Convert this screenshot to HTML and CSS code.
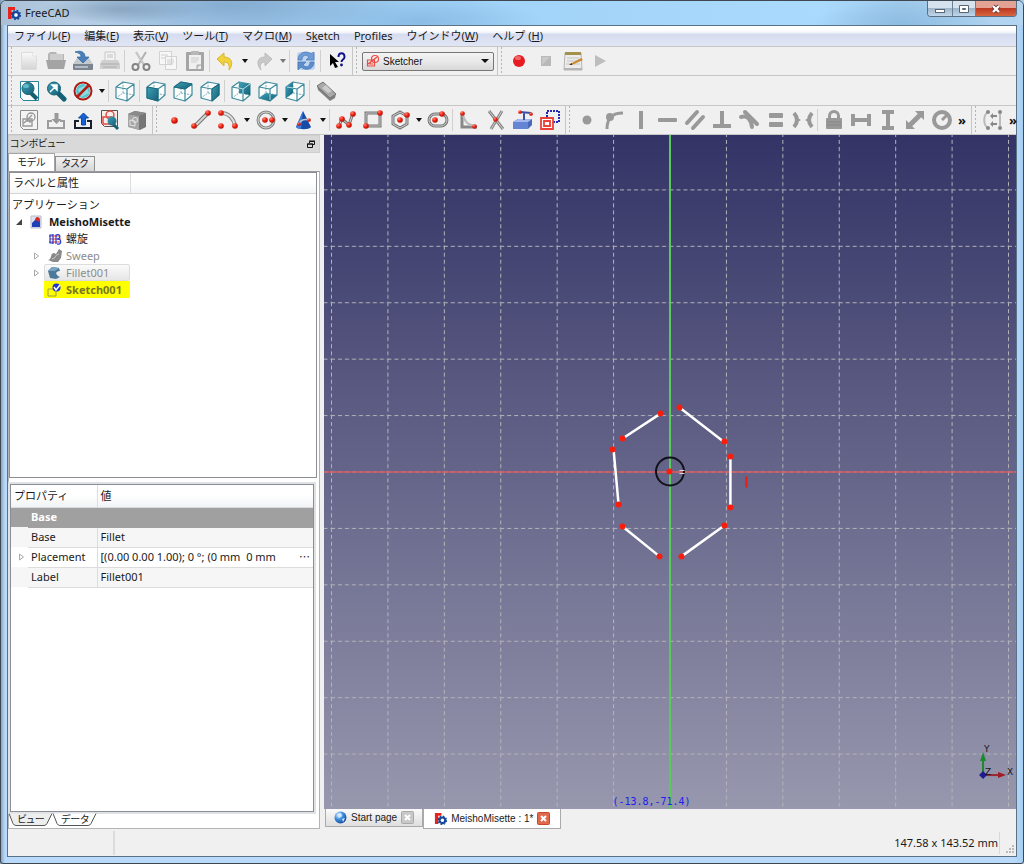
FILE: index.html
```html
<!DOCTYPE html>
<html lang="ja">
<head>
<meta charset="utf-8">
<title>FreeCAD</title>
<link rel="stylesheet" href="styles.css">
</head>
<body>
<svg class="defs" aria-hidden="true">
  <defs>
    <linearGradient id="pale" x1="0" y1="0" x2="0" y2="1"><stop offset="0" stop-color="#fafafa"/><stop offset="1" stop-color="#d4d4d4"/></linearGradient>
    <radialGradient id="globe" cx=".35" cy=".3" r=".8"><stop offset="0" stop-color="#d8f0ff"/><stop offset=".45" stop-color="#3f8fe0"/><stop offset="1" stop-color="#0c3f90"/></radialGradient>
    <radialGradient id="ball" cx=".35" cy=".3" r=".7"><stop offset="0" stop-color="#ff8a78"/><stop offset=".5" stop-color="#ef2413"/><stop offset="1" stop-color="#b51205"/></radialGradient>
    <linearGradient id="teal" x1="0" y1="0" x2="1" y2="1"><stop offset="0" stop-color="#3fa0b8"/><stop offset="1" stop-color="#136176"/></linearGradient>
    <linearGradient id="sky" x1="0" y1="0" x2="0" y2="1"><stop offset="0" stop-color="#333366"/><stop offset="1" stop-color="#9797ae"/></linearGradient>
    <pattern id="grid" width="56.5" height="56.5" patternUnits="userSpaceOnUse">
      <path d="M.5 0V56.5M0 .5H56.5" fill="none" stroke="#b4b4b8" stroke-dasharray="4 3"/>
    </pattern>
  </defs>
  <symbol id="logo" viewBox="0 0 14 14">
    <path d="M1 1h7v3H4.500v2H7v3H4.500v4H1z" fill="#e8231a"/>
    <circle cx="9" cy="9" r="3" fill="none" stroke="#15489c" stroke-width="2.200"/>
    <circle cx="9" cy="9" r="4.500" fill="none" stroke="#15489c" stroke-width="1.400" stroke-dasharray="1.750 1.780"/>
    <circle cx="9" cy="9" r="1.500" fill="#fff"/>
  </symbol>
  <symbol id="cube" viewBox="0 0 22 22">
    <path d="M2 7l7-5 11 2v11l-7 6-11-3z" fill="#fbfdfd"/>
    <g fill="none" stroke-linejoin="round">
      <path d="M9 2v11L2 18M9 13l11 2" stroke="#7fb0bd" stroke-width="1" stroke-dasharray="2 1"/>
      <path d="M2 7l11 2v12L2 18zM2 7l7-5 11 2-7 5M20 4v11l-7 6" stroke="#3f8b9d" stroke-width="1.200"/>
    </g>
  </symbol>
  <symbol id="dot" viewBox="0 0 6 6"><circle cx="3" cy="3" r="2.800" fill="url(#ball)"/></symbol>
  <symbol id="sketch" viewBox="0 0 14 14">
    <g fill="none" stroke="#ec4a42" stroke-width="1.200"><path d="M1.500 6h7v6h-7zM4 8v2h3"/><circle cx="9" cy="5" r="3.500"/><path d="M2 10l9-7"/></g>
  </symbol>
</svg>

<header class="titlebar">
  <svg class="i14"><use href="#logo"/></svg>
  <h1>FreeCAD</h1>
  <div class="winbuttons">
    <button aria-label="最小化"><svg viewBox="0 0 12 10"><rect x="1.500" y="5.500" width="9" height="3" fill="#fff" stroke="#596674"/></svg></button>
    <button aria-label="最大化"><svg viewBox="0 0 12 10"><path d="M1.500 1.500h9v7h-9zM4.500 4.500v1h3v-1z" fill="#fff" stroke="#596674" fill-rule="evenodd"/></svg></button>
    <button class="close" aria-label="閉じる"><svg viewBox="0 0 12 10"><path d="M3 2l6 6M9 2L3 8" stroke="#6c3535" stroke-width="4"/><path d="M3 2l6 6M9 2L3 8" stroke="#fff" stroke-width="2.400"/></svg></button>
  </div>
</header>

<div class="client">
<nav class="menubar">
  <a href="#">ファイル(<u>F</u>)</a><a href="#">編集(<u>E</u>)</a><a href="#">表示(<u>V</u>)</a><a href="#">ツール(<u>T</u>)</a><a href="#">マクロ(<u>M</u>)</a><a href="#">S<u>k</u>etch</a><a href="#">P<u>r</u>ofiles</a><a href="#">ウインドウ(<u>W</u>)</a><a href="#">ヘルプ (<u>H</u>)</a>
</nav>

<div class="toolrow">
  <div class="toolbar">
    <button aria-label="新規"><svg viewBox="0 0 22 22"><path d="M3.500 2.500h12l3 3v14h-15z" fill="url(#pale)" stroke="#dcdcdc"/><path d="M15 2v4h4" fill="#fff" stroke="#ddd"/></svg></button>
    <button aria-label="開く"><svg viewBox="0 0 22 22"><path d="M3 4l2-2h6l1 2h7v13H3z" fill="#b5b5b5"/><path d="M5 5h13M5 7h13M5 9h13" stroke="#e5e5e5"/><path d="M1 10h20l-2 9H3z" fill="#a4a4a4"/></svg></button>
    <button aria-label="保存"><svg viewBox="0 0 22 22"><path d="M5 8h12l4 6v5H1v-5z" fill="#c3c8cc"/><path d="M1 14h20v5q0 1-1 1H2q-1 0-1-1z" fill="#7b858f"/><path d="M3 17h13" stroke="#b4bdc5" stroke-width="2"/><path d="M3 2c6-2 10 0 10 5h4l-6 6-6-6h4c0-3-2-4-6-5z" fill="#4a80ba" stroke="#2d639f" stroke-width=".7"/></svg></button>
    <button aria-label="印刷"><svg viewBox="0 0 22 22"><path d="M6 2h10v9H6z" fill="#f3f3f3" stroke="#c8c8c8"/><path d="M8 5h6M8 7h6" stroke="#c2c2c2"/><path d="M3 10h16l2 4v5H1v-5z" fill="#cfcfcf"/><path d="M2 14h18M4 17h14" stroke="#acacac"/></svg></button>
    <hr>
    <button aria-label="切り取り"><svg viewBox="0 0 22 22"><path d="M6 2l8 13M16 2L8 15" stroke="#b0b0b0" stroke-width="2"/><path d="M6 2l8 13" stroke="#dedede" stroke-width=".8"/><circle cx="5.500" cy="17" r="3" fill="none" stroke="#848484" stroke-width="2"/><circle cx="16.500" cy="17" r="3" fill="none" stroke="#848484" stroke-width="2"/></svg></button>
    <button aria-label="コピー"><svg viewBox="0 0 22 22"><path d="M2.500 1.500h12v13h-12zM8.500 6.500h11v13h-11z" fill="#f7f7f7" stroke="#d2d2d2"/><path d="M4 5h7M4 8h4M10 10h7M10 12h7M10 14h6" stroke="#cfcfcf"/></svg></button>
    <button aria-label="貼り付け"><svg viewBox="0 0 22 22"><rect x="2" y="2" width="18" height="19" rx="1" fill="#a5a5a5"/><path d="M5 5h12v14H5z" fill="#f0f0f0"/><rect x="7" y="1" width="8" height="4" rx="1" fill="#b7b7b7"/><path d="M7 8h8M7 10h8M7 12h6" stroke="#ccc"/><path d="M13 19v-4h4" fill="#d0d0d0" stroke="#aaa"/></svg></button>
    <hr>
    <button aria-label="元に戻す"><svg viewBox="0 0 22 22"><path d="M9 3v4c8 0 10 7 5 13 1-5-1-8-5-8v4L2 9z" fill="#efd23c" stroke="#dcb527"/></svg></button><button class="drop" aria-label="元に戻す一覧"></button>
    <button aria-label="やり直し"><svg viewBox="0 0 22 22"><path d="M12 3v4C4 7 3 14 8 20c-2-5 0-8 4-8v4l7-7z" fill="#c8c8c8" stroke="#bcbcbc"/></svg></button><button class="drop dim" aria-label="やり直し一覧"></button>
    <hr>
    <button aria-label="更新"><svg viewBox="0 0 22 22"><rect x="2" y="2" width="18" height="18" rx="3" fill="#bdd3ee"/><path d="M3 10c0-8 9-10 13-6l3-2v8h-8l3-3c-3-3-7-2-7 3z" fill="#6f9cd4" stroke="#4778b9" stroke-width=".7"/><path d="M19 12c0 8-9 9-13 5l-3 3v-8h8l-3 3c3 3 7 2 7-3z" fill="#5d8dca" stroke="#4778b9" stroke-width=".7"/></svg></button>
    <hr>
    <button aria-label="ヘルプ"><svg viewBox="0 0 22 22"><path d="M4 4v12l3-3 2 5 3-1-3-5h4z" fill="#000"/><path d="M12.500 7c0-5 6-5 6 0 0 3-3 2-3 5" fill="none" stroke="#11118c" stroke-width="2"/><circle cx="15.500" cy="15" r="1.400" fill="#11118c"/></svg></button>
  </div>
  <div class="toolbar">
    <label class="combo"><svg class="i14"><use href="#sketch"/></svg><select aria-label="ワークベンチ"><option>Sketcher</option></select></label>
  </div>
  <div class="toolbar last">
    <button aria-label="記録"><svg viewBox="0 0 22 22"><circle cx="11" cy="11" r="6" fill="#e71c22"/><ellipse cx="10" cy="8" rx="3" ry="2" fill="#f0676a"/></svg></button>
    <button aria-label="停止"><svg viewBox="0 0 22 22"><path d="M6 6h10v10H6z" fill="#b8b8b8"/><path d="M7 7h8L7 15z" fill="#c9c9c9"/></svg></button>
    <button aria-label="マクロ編集"><svg viewBox="0 0 22 22"><path d="M3 3h16l1 17H2z" fill="#ececec" stroke="#b4b4b4"/><path d="M3 2h16v3H3z" fill="#a3924d"/><path d="M5 8h12M5 11h11M4 14h14" stroke="#c4c4c4"/><path d="M2 18h18v2H2z" fill="#b5b5b5"/><path d="M8 14l11-6 2 2-11 5z" fill="#c98b32"/><path d="M7 15l3-2v2z" fill="#333"/></svg></button>
    <button aria-label="実行"><svg viewBox="0 0 22 22"><path d="M6 5l11 6-11 6z" fill="#bdbdbd"/></svg></button>
  </div>
</div>

<div class="toolrow">
  <div class="toolbar last">
    <button aria-label="全体表示"><svg viewBox="0 0 22 22"><path d="M2.500 1.500h18v19h-15l-3-3z" fill="#fff" stroke="#2c8297"/><path d="M2 17l4 4" stroke="#2c8297"/><path d="M13 13l6 6" stroke="#155f73" stroke-width="4"/><circle cx="10" cy="8.500" r="6" fill="url(#teal)" stroke="#185e70"/><ellipse cx="8" cy="6" rx="3" ry="2" fill="#63b8ca"/></svg></button>
    <button aria-label="選択範囲表示"><svg viewBox="0 0 22 22"><path d="M13 13l6 6" stroke="#155f73" stroke-width="5" stroke-linecap="round"/><circle cx="9" cy="8.500" r="6.500" fill="url(#teal)" stroke="#185e70"/><path d="M5 12l5-5M7 5h5v5z" fill="#fff" stroke="#fff" stroke-width="1.500"/></svg></button>
    <button aria-label="描画スタイル"><svg viewBox="0 0 22 22"><circle cx="11" cy="11" r="7" fill="#55c3cd"/><path d="M6 9l8-4 3 8-8 4z" fill="#8eddde"/><circle cx="11" cy="11" r="8.500" fill="none" stroke="#a91a15" stroke-width="2"/><path d="M5 17L17 5" stroke="#b51b15" stroke-width="2.500"/></svg></button><button class="drop" aria-label="描画スタイル一覧"></button>
    <hr>
    <button aria-label="アクソメ"><svg><use href="#cube"/></svg></button>
    <hr>
    <button aria-label="前面"><svg viewBox="0 0 22 22"><use href="#cube"/><path d="M2 7l11 2v12L2 18z" fill="url(#teal)" stroke="#1d687c"/></svg></button>
    <button aria-label="上面"><svg viewBox="0 0 22 22"><use href="#cube"/><path d="M2 7l7-5 11 2-7 5z" fill="url(#teal)" stroke="#1d687c"/></svg></button>
    <button aria-label="右面"><svg viewBox="0 0 22 22"><use href="#cube"/><path d="M13 9l7-5v11l-7 6z" fill="url(#teal)" stroke="#1d687c"/></svg></button>
    <hr>
    <button aria-label="背面"><svg viewBox="0 0 22 22"><use href="#cube"/><path d="M9 2l11 2v11L9 13z" fill="url(#teal)"/><path d="M9 8l4 1 7-5M13 9v5" fill="none" stroke="#b7dbe3"/></svg></button>
    <button aria-label="底面"><svg viewBox="0 0 22 22"><use href="#cube"/><path d="M2 18l7-5 11 2-7 6z" fill="url(#teal)"/><path d="M13 14v6" stroke="#b7dbe3"/></svg></button>
    <button aria-label="左面"><svg viewBox="0 0 22 22"><use href="#cube"/><path d="M2 7l7-5v11l-7 5z" fill="url(#teal)"/><path d="M3 7l6 1" stroke="#b7dbe3"/></svg></button>
    <hr>
    <button aria-label="計測"><svg viewBox="0 0 22 22"><path d="M2 6l6-4 13 12-1 4-5 3L3 10z" fill="#808080"/><path d="M2 6l6-4 13 12-6 4z" fill="#a9a9a9" stroke="#777"/><path d="M7 8l4-3 6 6-4 2z" fill="#ccc"/></svg></button>
  </div>
</div>

<div class="toolrow">
  <div class="toolbar">
    <button aria-label="新規スケッチ"><svg viewBox="0 0 22 22"><path d="M2.500 1.500h17v19h-14l-3-3z" fill="#f4f4f4" stroke="#8c8c8c"/><g fill="none" stroke="#999" stroke-width="1.400"><circle cx="13" cy="8" r="4"/><path d="M5 10h9v7H5zM8 12h4v2M6 14l8-8"/></g></svg></button>
    <button aria-label="スケッチを読み込む"><svg viewBox="0 0 22 22"><path d="M7 12H3v7h16v-7h-4" fill="none" stroke="#9c9c9c" stroke-width="2"/><path d="M9.500 4h4v6h3l-5 5-5-5h3z" fill="#999"/></svg></button>
    <button aria-label="スケッチを終了"><svg viewBox="0 0 22 22"><path d="M7 12H3v7h16v-7h-4" fill="none" stroke="#16202e" stroke-width="2"/><path d="M9.500 16V9h-3l5-5 5 5h-3v7z" fill="#1560d8" stroke="#10479f"/></svg></button>
    <button aria-label="スケッチを表示"><svg viewBox="0 0 22 22"><path d="M2.500 1.500h16v16h-13l-3-3z" fill="#f7eeec" stroke="#555"/><g fill="none" stroke="#e34b43" stroke-width="1.500"><circle cx="11" cy="6" r="4"/><path d="M4 8h9v7H4z"/></g><path d="M14 15l5 5" stroke="#155f73" stroke-width="3"/><circle cx="13" cy="12" r="4.500" fill="url(#teal)"/></svg></button>
    <button aria-label="スケッチを面にマップ"><svg viewBox="0 0 22 22"><path d="M2 5l7-3 11 2v14l-6 3-11-3z" fill="#767676"/><path d="M2 5l11 2v14L2 18z" fill="#a6a6a6"/><path d="M2 5l7-3 11 2-7 3z" fill="#8a8a8a"/><path d="M4 11l5 1v5l-5-1z" fill="none" stroke="#e4e4e4"/><circle cx="9" cy="11" r="2.500" fill="none" stroke="#e4e4e4"/></svg></button>
  </div>
  <div class="toolbar">
    <button aria-label="点"><svg viewBox="0 0 22 22"><use href="#dot" x="8" y="8" width="7" height="7"/></svg></button>
    <button aria-label="線分"><svg viewBox="0 0 22 22"><path d="M4 18L18 4" stroke="#777" stroke-width="4"/><path d="M4 18L18 4" stroke="#d4d4d4" stroke-width="2"/><use href="#dot" x="1" y="14" width="6" height="6"/><use href="#dot" x="15" y="1" width="6" height="6"/></svg></button>
    <button aria-label="円弧"><svg viewBox="0 0 22 22"><path d="M4 4c8 0 13 6 14 13" fill="none" stroke="#888" stroke-width="4"/><path d="M4 4c8 0 13 6 14 13" fill="none" stroke="#ddd" stroke-width="2"/><use href="#dot" x="1" y="1" width="6" height="6"/><use href="#dot" x="15" y="14" width="6" height="6"/><use href="#dot" x="1" y="14" width="6" height="6"/></svg></button><button class="drop" aria-label="円弧一覧"></button>
    <button aria-label="円"><svg viewBox="0 0 22 22"><circle cx="11" cy="11" r="8" fill="none" stroke="#858585" stroke-width="3"/><circle cx="11" cy="11" r="8" fill="none" stroke="#d4d4d4"/><use href="#dot" x="7" y="8" width="6" height="6"/><use href="#dot" x="14" y="8" width="6" height="6"/></svg></button><button class="drop" aria-label="円一覧"></button>
    <button aria-label="円錐曲線"><svg viewBox="0 0 22 22"><path d="M10 2l8 16c-2 3-12 3-15 0z" fill="#174ba8"/><path d="M10 2l-2 18c-3 0-4-1-5-2z" fill="#3d7cda"/><path d="M6 15c2-5 6-5 10-4" fill="none" stroke="#bcc7d6" stroke-width="1.500"/><use href="#dot" x="4" y="13" width="4" height="4"/><use href="#dot" x="14" y="9" width="4" height="4"/></svg></button><button class="drop" aria-label="円錐曲線一覧"></button>
    <hr>
    <button aria-label="ポリライン"><svg viewBox="0 0 22 22"><path d="M4 17l3-7 7 6 4-12" fill="none" stroke="#777" stroke-width="3"/><path d="M4 17l3-7 7 6 4-12" fill="none" stroke="#ccc"/><use href="#dot" x="1" y="14" width="6" height="6"/><use href="#dot" x="4" y="7" width="6" height="6"/><use href="#dot" x="11" y="13" width="6" height="6"/><use href="#dot" x="15" y="2" width="6" height="6"/></svg></button>
    <button aria-label="長方形"><svg viewBox="0 0 22 22"><path d="M4 4h14v13H4z" fill="none" stroke="#777" stroke-width="3"/><path d="M4 4h14v13H4z" fill="none" stroke="#c5c5c5"/><use href="#dot" x="1" y="14" width="6" height="6"/><use href="#dot" x="15" y="1" width="6" height="6"/></svg></button>
    <button aria-label="多角形"><svg viewBox="0 0 22 22"><path d="M11 3l7 4v8l-7 4-7-4V7z" fill="none" stroke="#777" stroke-width="3"/><path d="M11 3l7 4v8l-7 4-7-4V7z" fill="none" stroke="#ccc"/><use href="#dot" x="8" y="8" width="6" height="6"/><use href="#dot" x="15" y="3" width="6" height="6"/></svg></button><button class="drop" aria-label="多角形一覧"></button>
    <button aria-label="長円形"><svg viewBox="0 0 22 22"><rect x="2" y="5" width="18" height="12" rx="6" fill="none" stroke="#777" stroke-width="3"/><rect x="2" y="5" width="18" height="12" rx="6" fill="none" stroke="#ccc"/><use href="#dot" x="5" y="8" width="6" height="6"/><use href="#dot" x="12" y="2" width="6" height="6"/></svg></button>
    <hr>
    <button aria-label="フィレット"><svg viewBox="0 0 22 22"><path d="M4 4v14h15" fill="none" stroke="#888" stroke-width="3"/><path d="M5 5c1 7 4 11 13 12" fill="none" stroke="#bbb" stroke-width="2"/><use href="#dot" x="2" y="2" width="5" height="5"/><use href="#dot" x="14" y="15" width="5" height="5"/></svg></button>
    <button aria-label="トリム"><svg viewBox="0 0 22 22"><path d="M4 2l14 18M17 2L6 20" stroke="#858585" stroke-width="3"/><path d="M4 2l14 18M17 2L6 20" stroke="#ccc"/><use href="#dot" x="8" y="8" width="5" height="5"/></svg></button>
    <button aria-label="外部形状"><svg viewBox="0 0 22 22"><path d="M1 13l5-3h14v6l-4 4H1z" fill="#4968ba"/><path d="M1 13h15v7H1z" fill="#6484d4"/><path d="M1 13l5-3h14l-4 3z" fill="#a4b8ee"/><path d="M12 11V4M8 3l11 1" stroke="#3952a5" stroke-width="2"/><use href="#dot" x="6" y="1" width="4" height="4"/><use href="#dot" x="17" y="3" width="4" height="4"/></svg></button>
    <button aria-label="コピー作成"><svg viewBox="0 0 22 22"><path d="M8 8V2h12v11h-6" fill="none" stroke="#2727b5" stroke-width="2" stroke-dasharray="2 1"/><path d="M2 9h12v11H2zM5 12h6v5H5z" fill="#fff" stroke="#eb4138" stroke-width="1.800"/></svg></button>
  </div>
  <div class="toolbar constraints">
    <button aria-label="一致拘束"><svg viewBox="0 0 22 22"><circle cx="11" cy="11" r="4.500"/></svg></button>
    <button aria-label="点オブジェクト拘束"><svg viewBox="0 0 22 22"><path d="M4 20C4 9 9 4 20 4" fill="none" stroke="#999" stroke-width="3"/><circle cx="7" cy="8" r="4"/></svg></button>
    <button aria-label="垂直拘束"><svg viewBox="0 0 22 22"><path d="M9 2h4v18H9z"/></svg></button>
    <button aria-label="水平拘束"><svg viewBox="0 0 22 22"><rect x="1" y="9" width="19" height="4" rx="1"/></svg></button>
    <button aria-label="平行拘束"><svg viewBox="0 0 22 22"><path d="M3 14L13 3M9 19L19 8" stroke="#999" stroke-width="4" stroke-linecap="round"/></svg></button>
    <button aria-label="直角拘束"><svg viewBox="0 0 22 22"><path d="M9 2h4v13h7v4H2v-4h7z"/></svg></button>
    <button aria-label="正接拘束"><svg viewBox="0 0 22 22"><path d="M7 3l12 12" stroke="#999" stroke-width="4" stroke-linecap="round"/><path d="M3 8c7-2 10 3 11 10" fill="none" stroke="#999" stroke-width="4" stroke-linecap="round"/></svg></button>
    <button aria-label="等値拘束"><svg viewBox="0 0 22 22"><rect x="4" y="4" width="14" height="5" rx="1"/><rect x="4" y="13" width="14" height="5" rx="1"/></svg></button>
    <button aria-label="対称拘束"><svg viewBox="0 0 22 22"><path d="M2 4q6 7 0 14M20 4q-6 7 0 14" fill="none" stroke="#999" stroke-width="4"/><path d="M4 8l5 3-5 3zM18 8l-5 3 5 3z"/></svg></button>
    <hr>
    <button aria-label="ロック"><svg viewBox="0 0 22 22"><rect x="3" y="9" width="16" height="11" rx="1"/><path d="M6.500 10V7c0-6 9-6 9 0v3" fill="none" stroke="#999" stroke-width="3"/><path d="M4 13h14M4 16h14" stroke="#858585"/></svg></button>
    <button aria-label="水平距離"><svg viewBox="0 0 22 22"><path d="M3 5v12M19 5v12M3 11h16" stroke="#999" stroke-width="4"/></svg></button>
    <button aria-label="垂直距離"><svg viewBox="0 0 22 22"><path d="M5 3h12M5 19h12M11 3v16" stroke="#999" stroke-width="4"/></svg></button>
    <button aria-label="距離"><svg viewBox="0 0 22 22"><path d="M6 16L16 6" stroke="#999" stroke-width="5"/><path d="M20 2v9l-9-9zM2 20v-9l9 9z"/></svg></button>
    <button aria-label="半径"><svg viewBox="0 0 22 22"><circle cx="11" cy="11" r="8" fill="none" stroke="#999" stroke-width="4"/><path d="M11 11l5-5" stroke="#999" stroke-width="3"/></svg></button>
    <button class="more" aria-label="その他の拘束">»</button>
  </div>
  <div class="toolbar last">
    <button aria-label="対称"><svg viewBox="0 0 22 22"><path d="M6 3c-5 3-5 13 0 16M18 4v13" fill="none" stroke="#bbb" stroke-width="2"/><path d="M9 7h6M9 15h6" stroke="#888" stroke-width="2"/><g fill="#888"><path d="M11 4v6L8 7zM11 12v6l-3-3z"/><circle cx="6" cy="3" r="2"/><circle cx="6" cy="19" r="2"/><circle cx="18" cy="3" r="2"/><circle cx="18" cy="19" r="2"/></g></svg></button>
    <button class="more" aria-label="その他のツール">»</button>
  </div>
</div>

<main class="work">
  <aside class="dock">
    <div class="dock-title"><h2>コンボビュー</h2><button aria-label="フロート"><svg viewBox="0 0 8 8"><path d="M2.500 3V1.500h5v3H6M2 1h6M.5 4v3.500h5V4zM0 4h6" fill="none" stroke="#111"/></svg></button></div>
    <div class="tabs"><button class="on">モデル</button><button>タスク</button></div>
    <div class="page">
      <section class="tree">
        <div class="tree-head"><span>ラベルと属性</span><span></span></div>
        <ul>
          <li><div class="node">アプリケーション</div></li>
          <li><div class="node doc"><svg class="arrow" viewBox="0 0 8 8"><path d="M7 1v6H1z" fill="#444"/></svg><svg class="i14" viewBox="0 0 14 14"><path d="M2 1h10v12H2z" fill="#dde2ee" stroke="#b6bccc"/><path d="M6 5c0-4 5-4 5 0v3H6z" fill="#d92825"/><path d="M3 8l3-3 5 2v5H3z" fill="#1e3fb5"/></svg><b>MeishoMisette</b></div>
            <ul>
              <li><div class="node"><i class="arrow"></i><svg class="i14" viewBox="0 0 14 14"><path d="M1 4h11M1 10h11M2 7h11" stroke="#e4342f"/><path d="M5 2v10M5 3H2v8h3M8 12V3c5-2 5 4 1 4 5 0 5 6 0 5" fill="none" stroke="#2439d2" stroke-width="1.200"/></svg><span>螺旋</span></div></li>
              <li><div class="node dim"><svg class="arrow" viewBox="0 0 8 8"><path d="M2.500 1l4 3-4 3z" fill="#fff" stroke="#aaa"/></svg><svg class="i14" viewBox="0 0 14 14"><path d="M0 11c4 0 2-7 6-7l2 1 3-5 3 2-1 7-3 4-5 0z" fill="#8a8a8a"/><path d="M4 10c4 0 3-5 7-5" fill="none" stroke="#ccc"/></svg><span>Sweep</span></div></li>
              <li><div class="node dim"><svg class="arrow" viewBox="0 0 8 8"><path d="M2.500 1l4 3-4 3z" fill="#fff" stroke="#aaa"/></svg><span class="hover"><svg class="i14" viewBox="0 0 14 14"><path d="M1 5l4-4 7 1 1 3c-5 0-5 4 0 6l-4 2-6-1z" fill="#4d7a9b"/><path d="M1 5l4-4 7 1-4 3z" fill="#79a3c0"/></svg>Fillet001</span></div></li>
              <li><div class="node dim"><i class="arrow"></i><span class="edit"><svg class="i14" viewBox="0 0 14 14"><path d="M1 6h8v7H1z" fill="none" stroke="#9a9a55"/><circle cx="9.500" cy="4.500" r="4" fill="#2034cf"/><path d="M7 4l2 3 4-5" fill="none" stroke="#fff" stroke-width="1.500"/></svg><b>Sketch001</b></span></div></li>
            </ul>
          </li>
        </ul>
      </section>
      <section class="props">
        <table>
          <colgroup><col class="c-arrow"><col class="c-name"><col></colgroup>
          <thead><tr><th colspan="2">プロパティ</th><th>値</th></tr></thead>
          <tbody>
            <tr class="group"><td></td><th colspan="2">Base</th></tr>
            <tr class="alt"><td></td><td>Base</td><td>Fillet</td></tr>
            <tr><td><svg class="arrow" viewBox="0 0 8 8"><path d="M2.500 1l4 3-4 3z" fill="#fff" stroke="#aaa"/></svg></td><td>Placement</td><td><span class="value"><span>[(0.00 0.00 1.00); 0 °; (0 mm&nbsp; 0 mm</span><span>⋯</span></span></td></tr>
            <tr class="alt"><td></td><td>Label</td><td>Fillet001</td></tr>
          </tbody>
        </table>
      </section>
      <div class="foottabs">
        <button><svg viewBox="0 0 44 13" preserveAspectRatio="none"><path d="M0 .5l4 10q1 2 3 2h28q2 0 3-2l5-10" fill="#eee" stroke="#555"/></svg><span>ビュー</span></button>
        <button class="on"><svg viewBox="0 0 44 13" preserveAspectRatio="none"><path d="M0 .5l4 10q1 2 3 2h28q2 0 3-2l5-10" fill="#fff" stroke="#555"/></svg><span>データ</span></button>
      </div>
    </div>
  </aside>

  <section class="mdi">
    <svg class="view" viewBox="-346 -337 693 675" preserveAspectRatio="xMidYMid slice" role="img" aria-label="スケッチ">
      <rect x="-346" y="-337" width="693" height="675" fill="url(#sky)"/>
      <rect x="-346" y="-337" width="693" height="675" fill="url(#grid)"/>
      <path d="M-346 .5H347" stroke="#d45a60" stroke-width="1.500"/>
      <path d="M.5-337V338" stroke="#58cb5c" stroke-width="2"/>
      <path d="M-9-58l-38 25M10-64l44 34M-56-22l5 55M-47 55l37 30M12 85l43-31M61-15v51" stroke="#fff" stroke-width="2.500"/>
      <circle cx=".5" cy="0" r="14" fill="none" stroke="#111118" stroke-width="2"/>
      <path d="M10-1h5M10 2h5" stroke="#ddd"/>
      <g fill="#fb1d0b"><circle r="3"/><circle cx="-9" cy="-58" r="3"/><circle cx="-47" cy="-33" r="3"/><circle cx="10" cy="-64" r="3"/><circle cx="55" cy="-30" r="3"/><circle cx="-57" cy="-22" r="3"/><circle cx="-51" cy="33" r="3"/><circle cx="-47" cy="55" r="3"/><circle cx="-10" cy="85" r="3"/><circle cx="12" cy="85" r="3"/><circle cx="55" cy="54" r="3"/><circle cx="61" cy="-15" r="3"/><circle cx="61" cy="36" r="3"/></g>
      <path d="M77 5v11" stroke="#ef1f10" stroke-width="2.500"/>
      <text class="coord" x="-57" y="334">(-13.8,-71.4)</text>
      <path d="M314 304v-16" stroke="#1c8a2c" stroke-width="2"/><path d="M311 290l3-9 3 9z" fill="#1c8a2c"/>
      <path d="M314 304h18" stroke="#9c2630" stroke-width="2"/><path d="M329 301l8 3-8 3z" fill="#a01d25"/>
      <path d="M314 300l4 4-4 4-4-4z" fill="#1d1d91"/>
      <g class="axis"><text x="315" y="281">Y</text><text x="338" y="304">X</text><text x="316" y="304">Z</text></g>
    </svg>
    <div class="mditabs">
      <button><svg viewBox="0 0 13 13"><circle cx="6.500" cy="6.500" r="6" fill="url(#globe)"/><path d="M3 3l4-1 1 3-3 2zM8 8l3-1-2 4z" fill="#d4eafb"/></svg><span>Start page</span><svg viewBox="0 0 13 13"><rect x=".5" y=".5" width="12" height="12" rx="1" fill="#c8c8c8" stroke="#aaa"/><path d="M4 4l5 5M9 4L4 9" stroke="#fff" stroke-width="2"/></svg></button>
      <button class="on"><svg><use href="#logo"/></svg><span>MeishoMisette : 1*</span><svg viewBox="0 0 13 13"><rect x=".5" y=".5" width="12" height="12" rx="1" fill="#e0694c" stroke="#c24a33"/><path d="M4 4l5 5M9 4L4 9" stroke="#fff" stroke-width="2"/></svg></button>
    </div>
  </section>
</main>

<footer class="status"><div class="message"></div><output>147.58 x 143.52 mm</output><svg viewBox="0 0 9 9"><path d="M7 1h2M4 4h2M7 4h2M1 7h2M4 7h2M7 7h2" stroke="#bbb" stroke-width="2"/></svg></footer>
</div>
</body>
</html>
```
FILE: styles.css
```css
* { box-sizing: border-box; }
:root { --ui: "Noto Sans", "Noto Sans CJK JP", sans-serif; --gothic: "Liberation Sans", "Noto Sans CJK JP", sans-serif; --line: #c6c6c6; }
body {
  margin: 0; height: 100vh; padding: 0 6px 6px; display: flex; flex-direction: column;
  font: 11px/16px var(--ui); color: #1a1a1a; overflow: hidden;
  border: 1px solid #3f4850; border-radius: 6px 6px 3px 3px;
  background: linear-gradient(90deg, #7d99b5 0, #b9dafa 5px, #b9dafa 99%, #a4cdf3 100%);
}
button { border: 0; padding: 0; background: none; font: inherit; color: inherit; display: flex; align-items: center; justify-content: center; }
h1, h2 { margin: 0; font: inherit; }
ul { list-style: none; margin: 0; padding: 0; }
.defs { position: absolute; width: 0; height: 0; }
.i14 { width: 14px; height: 14px; flex: none; }

.titlebar {
  height: 24px; flex: none; margin: 0 -6px; padding: 0 6px; display: flex; align-items: center; gap: 4px;
  background:
    radial-gradient(ellipse 80px 14px at 120px 8px, #7e98b2aa, transparent),
    radial-gradient(ellipse 170px 30px at 230px 4px, #7fa6cccc, transparent),
    radial-gradient(ellipse 120px 24px at 420px 20px, #7fb4dfaa, transparent),
    radial-gradient(ellipse 90px 22px at 900px 22px, #84b7deaa, transparent),
    linear-gradient(90deg, #a9c0d6 0, #b7cfe6 80px, #9cc6ea 260px, #a2d3f8 500px, #aadafd 820px, #9fc9ea 900px, #b5d6f2 100%);
}
.titlebar h1 { flex: 1; }
.winbuttons { display: flex; align-self: flex-start; height: 16px; border: 1px solid #5c7085; border-top: 0; border-radius: 0 0 4px 4px; overflow: hidden; }
.winbuttons button { width: 24px; background: linear-gradient(#d6e3ef 45%, #9fb5ca 50%, #c0d6ea); }
.winbuttons button + button { width: 23px; border-left: 1px solid #6c8094; }
.winbuttons button.close { width: 41px; background: linear-gradient(#e2a394 45%, #bd3a22 50%, #d6653f); }
.winbuttons svg { width: 12px; height: 10px; }

.client { flex: 1; min-height: 0; display: flex; flex-direction: column; background: #f0f0f0; border: 1px solid #5b7186; }
.menubar { height: 21px; flex: none; display: flex; align-items: center; gap: 14px; padding: 0 6px; border-bottom: 1px solid var(--line); background: linear-gradient(#fff 20%, #eef1fa 35%, #d6dcef 40%, #e1e6f5); }
.menubar a { color: #1a1a1a; text-decoration: none; white-space: nowrap; }
.menubar u { text-underline-offset: 1px; }

.toolrow { height: 29px; flex: none; display: flex; border-bottom: 1px solid var(--line); }
.toolrow:nth-of-type(2) { height: 30px; }
.toolbar { display: flex; align-items: center; padding-left: 7px; padding-right: 2px; border-right: 1px solid var(--line); background: radial-gradient(circle, #b4b4b4 1px, transparent 1px) 2px 3px / 3px 4px repeat-y; }
.toolbar.last { border-right: 0; flex: 1; }
.toolbar button { width: 27px; height: 27px; flex: none; }
.toolbar svg { width: 22px; height: 22px; }
.toolbar hr { width: 1px; height: 22px; margin: 0 2px 0 1px; border: 0; background: #d0d0d0; }
.toolbar .drop { width: 11px; }
.drop::before { content: ""; border: 3px solid transparent; border-top: 4px solid #111; border-bottom: 0; }
.drop.dim::before { border-top-color: #777; }
.toolbar .more { width: 14px; font: bold 13px var(--ui); color: #111; }
.constraints svg { fill: #999; }
.toolbar .combo { position: relative; display: flex; align-items: center; margin: 0 1px 0 2px; }
.combo select { width: 132px; height: 19px; padding: 0 20px; border: 1px solid #777; border-radius: 2px; appearance: none; font: 10px var(--gothic); color: #111; background: linear-gradient(#f3f3f3, #e9e9e9 50%, #d8d8d8); }
.combo svg { position: absolute; left: 4px; width: 14px; height: 14px; }
.combo::after { content: ""; position: absolute; right: 5px; border: 4px solid transparent; border-top-color: #111; border-bottom: 0; }

.work { flex: 1; min-height: 0; display: flex; gap: 4px; }
.dock { width: 312px; flex: none; display: flex; flex-direction: column; }
.dock-title { height: 18px; flex: none; display: flex; align-items: center; justify-content: space-between; padding: 0 4px 0 1px; background: #d9d9d9; border: 1px solid #cfcfcf; }
.dock-title h2, .tabs, .foottabs { font: 10px/14px var(--gothic); font-feature-settings: "palt"; }
.dock-title svg { width: 8px; height: 8px; }
.tabs { display: flex; align-items: flex-end; height: 18px; flex: none; }
.tabs button { width: 40px; height: 15px; border: 1px solid #8e8f8f; border-bottom: 0; background: linear-gradient(#f2f2f2, #d6d6d6); }
.tabs .on { width: 47px; height: 18px; background: #fff; border-color: #a5a5a5; }
.page { flex: 1; min-height: 0; display: flex; flex-direction: column; background: #fff; border: 1px solid #b4b4b4; border-top-color: #999; }
.tree { flex: 14; border: 1px solid #8b8e96; margin-right: 2px; }
.tree-head { display: flex; height: 21px; border-bottom: 1px solid #d5d5d5; background: linear-gradient(#fff 45%, #f4f5f7); }
.tree-head span { padding: 2px 3px; width: 121px; border-right: 1px solid #dedede; }
.tree-head span + span { flex: 1; border: 0; }
.tree > ul { padding-top: 2px; }
.node { height: 17px; display: flex; align-items: center; padding-left: 2px; white-space: nowrap; }
.node.doc { padding-left: 5px; gap: 6px; }
.node .arrow { width: 8px; height: 8px; flex: none; }
.tree ul ul .node { padding-left: 22px; gap: 4px; }
.tree ul ul .node > .i14 { margin-left: 4px; }
.dim { color: #8c8c8c; }
.hover, .edit { display: flex; align-items: center; gap: 5px; width: 86px; height: 17px; padding-left: 3px; }
.hover { border: 1px solid #dcdcdc; border-radius: 2px; background: linear-gradient(#fafafa, #e6e6e6); padding-left: 2px; }
.edit { background: #ff0; color: #777722; }
.props { flex: 15; margin: 6px 5px 0 1px; border: 1px solid #8b8e96; outline: 2px solid #e0e1e5; }
table { width: 100%; border-collapse: collapse; table-layout: fixed; }
.c-arrow { width: 17px; }
.c-name { width: 69px; }
th, td { height: 20px; padding: 0 3px; text-align: left; font-weight: normal; overflow: hidden; white-space: nowrap; border-bottom: 1px solid #dcdcdc; }
thead th { height: 22px; background: linear-gradient(#fff 45%, #f2f3f5); }
thead th:first-child { border-right: 1px solid #dedede; }
tr > td:first-child { padding: 0; border-bottom: 0; }
td:nth-child(2) { border-right: 1px solid #dcdcdc; }
.alt { background: #f6f6f6; }
.group { background: #a0a0a0; color: #fff; }
.group th { font-weight: bold; border-color: #a0a0a0; }
td .arrow { width: 8px; height: 8px; display: block; margin-left: 6px; }
.value { display: flex; justify-content: space-between; }
.foottabs { height: 15px; flex: none; display: flex; margin-top: 1px; }
.foottabs button { position: relative; width: 44px; height: 13px; }
.foottabs svg { position: absolute; width: 100%; height: 100%; }
.foottabs span { position: relative; }

.mdi { flex: 1; min-width: 0; display: flex; flex-direction: column; }
.view { flex: 1; min-height: 0; width: 100%; display: block; }
.coord { font: 10px "DejaVu Sans Mono", monospace; fill: #2020f0; }
.axis { font: 9px "DejaVu Sans", sans-serif; fill: #15151c; }
.mditabs { display: flex; align-items: flex-start; height: 20px; flex: none; padding-left: 1px; font: 10px var(--gothic); }
.mditabs button { height: 18px; padding: 0 8px; gap: 4px; border: 1px solid #aaa; border-top: 0; background: linear-gradient(#fafafa, #dedede); }
.mditabs .on { height: 20px; padding: 0 10px; background: #fff; }
.mditabs svg { width: 13px; height: 13px; flex: none; }

.status { height: 27px; flex: none; display: flex; align-items: center; }
.message { width: 107px; height: 24px; border-right: 2px solid #dcdcdc; }
.status output { flex: 1; text-align: right; border-right: 1px solid #d8d8d8; height: 22px; line-height: 22px; padding-right: 1px; }
.status svg { width: 9px; height: 9px; margin: 14px 2px 0 5px; }
```
